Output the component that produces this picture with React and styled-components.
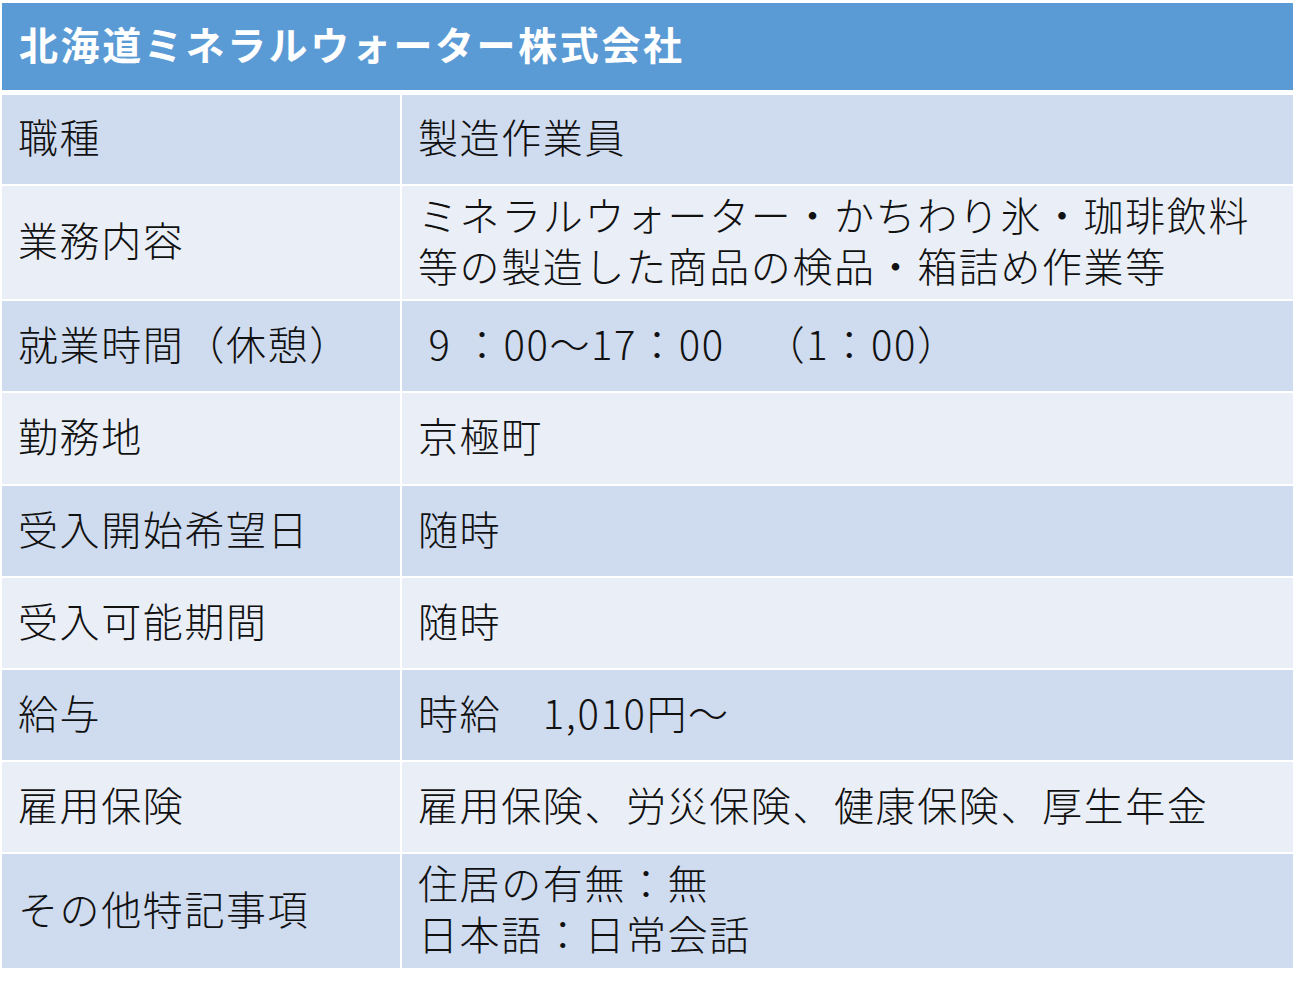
import React from 'react'
import styled, { createGlobalStyle } from 'styled-components'

const GlobalStyle = createGlobalStyle`
  html, body {
    margin: 0;
    padding: 0;
    background: #ffffff;
  }
  body {
    font-family: "Noto Sans CJK JP", "Noto Sans", sans-serif;
    color: #111;
  }
`

const Page = styled.div`
  padding: 3px 0 0 2px;
`

const Table = styled.div`
  width: 1291px;
  display: flex;
  flex-direction: column;
  gap: 2px;
`

const Header = styled.div`
  height: 87px;
  box-sizing: border-box;
  margin-bottom: 3px;
  background: #5b9bd5;
  color: #ffffff;
  font-weight: 700;
  font-size: 39px;
  letter-spacing: 2.6px;
  display: flex;
  align-items: center;
  padding: 0 0 8px 17px;
`

const Row = styled.div`
  display: grid;
  grid-template-columns: 398px 891px;
  column-gap: 2px;
  height: ${p => p.$h}px;
`

const Cell = styled.div`
  background: ${p => (p.$band ? '#cfdbee' : '#e9eef7')};
  display: flex;
  flex-direction: column;
  justify-content: center;
  padding: 0 0 6px 16px;
  font-size: 40px;
  font-weight: 300;
  line-height: 51px;
  letter-spacing: 1.6px;
  white-space: pre;
`

const Gap = styled.span`
  display: inline-block;
  width: ${p => p.$w}px;
`

const rows = [
  { label: '職種', value: ['製造作業員'], h: 89 },
  { label: '業務内容', value: ['ミネラルウォーター・かちわり氷・珈琲飲料', '等の製造した商品の検品・箱詰め作業等'], h: 113 },
  { label: '就業時間（休憩）', value: [<> 9 ：00～17：00<Gap $w={40} />（1：00）</>], h: 90 },
  { label: '勤務地', value: ['京極町'], h: 91 },
  { label: '受入開始希望日', value: ['随時'], h: 90 },
  { label: '受入可能期間', value: ['随時'], h: 90 },
  { label: '給与', value: ['時給　1,010円～'], h: 90 },
  { label: '雇用保険', value: ['雇用保険、労災保険、健康保険、厚生年金'], h: 90 },
  { label: 'その他特記事項', value: ['住居の有無：無', '日本語：日常会話'], h: 114 },
]

export default function App() {
  return (
    <Page>
      <GlobalStyle />
      <Table>
        <Header>北海道ミネラルウォーター株式会社</Header>
        {rows.map((r, i) => (
          <Row key={r.label} $h={r.h}>
            <Cell $band={i % 2 === 0}>{r.label}</Cell>
            <Cell $band={i % 2 === 0}>
              {r.value.map((line, j) => (
                <div key={j}>{line}</div>
              ))}
            </Cell>
          </Row>
        ))}
      </Table>
    </Page>
  )
}
